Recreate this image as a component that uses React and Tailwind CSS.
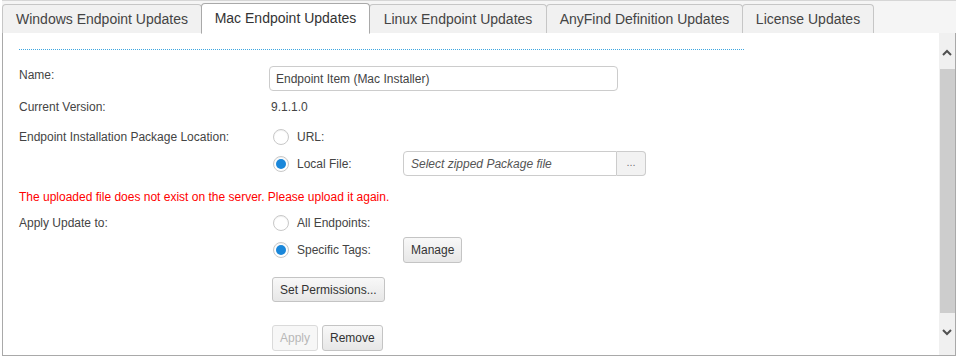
import React from 'react';

const tabs = [
    { label: 'Windows Endpoint Updates', width: 'w-[200px]' },
    { label: 'Mac Endpoint Updates', width: 'w-[169px]', active: true },
    { label: 'Linux Endpoint Updates', width: 'w-[178px]' },
    { label: 'AnyFind Definition Updates', width: 'w-[197px]' },
    { label: 'License Updates', width: 'w-[132px]' },
];

const Radio = ({ checked }) => (
    <span className="w-[16px] h-[16px] rounded-full border border-[#c8c8c8] bg-white flex items-center justify-center shrink-0 shadow-[inset_0_1px_1px_rgba(0,0,0,0.06)]">
        {checked && <span className="w-[10px] h-[10px] rounded-full bg-[#1a87da]" />}
    </span>
);

const Button = ({ children, disabled, className = '' }) => (
    <button
        type="button"
        className={`h-full px-[7px] rounded-[3px] border text-[12px] leading-none ${
            disabled
                ? 'border-[#dadada] bg-[#f7f7f7] text-[#b8b8b8]'
                : 'border-[#c4c4c4] bg-gradient-to-b from-[#f8f8f8] to-[#e7e7e7] text-[#333]'
        } ${className}`}
    >
        {children}
    </button>
);

const Row = ({ label, children, className = '' }) => (
    <div className={`flex ${className}`}>
        <div className="w-[251px] shrink-0 leading-[16px] pt-[1px]">{label}</div>
        <div className="flex-1">{children}</div>
    </div>
);

export default function App() {
    return (
        <div className="w-[956px] h-[357px] bg-white text-[#444] font-['Liberation_Sans',Arial,sans-serif]">
            <div className="ml-[2px] w-[954px] h-[356px] border-t border-[#d6d6d6] bg-[#f5f5f5] flex flex-col">
                {/* tab strip */}
                <div className="flex items-end h-[33px] shrink-0">
                    {tabs.map((tab, i) => (
                        <div
                            key={tab.label}
                            className={`${tab.width} ${i > 0 ? '-ml-px' : ''} flex items-center justify-center text-[14px] rounded-t-[4px] border border-[#c6c6c6] ${
                                tab.active
                                    ? 'h-[31px] bg-white border-b-white text-[#333] relative z-10 border-l-[#a9a9a9] border-r-[#a9a9a9] border-t-[#a9a9a9]'
                                    : 'h-[30px] bg-[#f1f1f1] border-b-[#a9a9a9]'
                            }`}
                        >
                            {tab.label}
                        </div>
                    ))}
                    <div className="flex-1 border-b border-[#a9a9a9]" />
                </div>

                {/* panel */}
                <div className="flex-1 flex bg-white border-l border-r border-b border-[#a9a9a9] -mt-px">
                    <div className="flex-1 pl-[16px] pt-[16px] text-[12px]">
                        <div className="w-[725px] border-t border-dotted border-[#3fa6e0]" />

                        <Row label="Name:" className="mt-[16px]">
                            <input
                                readOnly
                                value="Endpoint Item (Mac Installer)"
                                className="w-[349px] h-[25px] -ml-[1px] px-[6px] border border-[#cccccc] rounded-[4px] text-[12px] text-[#444] outline-none"
                            />
                        </Row>

                        <Row label="Current Version:" className="mt-[7px]">
                            <span className="block leading-[16px] ml-[1px] pt-[1px]">9.1.1.0</span>
                        </Row>

                        <Row label="Endpoint Installation Package Location:" className="mt-[13px]">
                            <div className="flex items-center gap-[8px] ml-[3px] leading-[16px] mt-[1px]">
                                <Radio />
                                <span>URL:</span>
                            </div>
                        </Row>

                        <Row label="" className="mt-[6px]">
                            <div className="flex items-center h-[25px]">
                                <div className="w-[133px] flex items-center gap-[8px] pl-[3px]">
                                    <Radio checked />
                                    <span>Local File:</span>
                                </div>
                                <div className="flex h-[25px]">
                                    <div className="w-[214px] h-full flex items-center pl-[7px] border border-[#cccccc] rounded-l-[4px] italic text-[#555]">
                                        Select zipped Package file
                                    </div>
                                    <div className="w-[29px] h-full flex items-center justify-center border border-l-0 border-[#cccccc] rounded-r-[4px] bg-[#f2f2f2] text-[#777] text-[11px] pb-[3px]">
                                        ...
                                    </div>
                                </div>
                            </div>
                        </Row>

                        <div className="mt-[13px] leading-[16px] text-[#ff0000]">
                            The uploaded file does not exist on the server. Please upload it again.
                        </div>

                        <Row label="Apply Update to:" className="mt-[9px]">
                            <div className="flex items-center gap-[8px] ml-[3px] mt-[1px] leading-[16px]">
                                <Radio />
                                <span>All Endpoints:</span>
                            </div>
                        </Row>

                        <Row label="" className="mt-[6px]">
                            <div className="flex items-center h-[26px]">
                                <div className="w-[133px] flex items-center gap-[8px] pl-[3px]">
                                    <Radio checked />
                                    <span>Specific Tags:</span>
                                </div>
                                <Button>Manage</Button>
                            </div>
                        </Row>

                        <Row label="" className="mt-[14px]">
                            <div className="h-[25px] ml-[2px] flex">
                                <Button>Set Permissions...</Button>
                            </div>
                        </Row>

                        <Row label="" className="mt-[23px]">
                            <div className="h-[26px] ml-[2px] flex gap-[4px]">
                                <Button disabled>Apply</Button>
                                <Button>Remove</Button>
                            </div>
                        </Row>
                    </div>

                    {/* scrollbar */}
                    <div className="w-[16px] bg-[#f0f0f0] flex flex-col items-center shrink-0">
                        <div className="h-[36px] w-full flex items-center justify-center pt-[2px]">
                            <svg width="10" height="7" viewBox="0 0 10 7">
                                <polyline points="1,6 5,2 9,6" fill="none" stroke="#505050" strokeWidth="2" />
                            </svg>
                        </div>
                        <div className="w-[15px] h-[244px] bg-[#cdcdcd]" />
                        <div className="flex-1 w-full flex items-center justify-center pb-[4px]">
                            <svg width="10" height="7" viewBox="0 0 10 7">
                                <polyline points="1,1 5,5 9,1" fill="none" stroke="#505050" strokeWidth="2" />
                            </svg>
                        </div>
                    </div>
                </div>
            </div>
        </div>
    );
}
